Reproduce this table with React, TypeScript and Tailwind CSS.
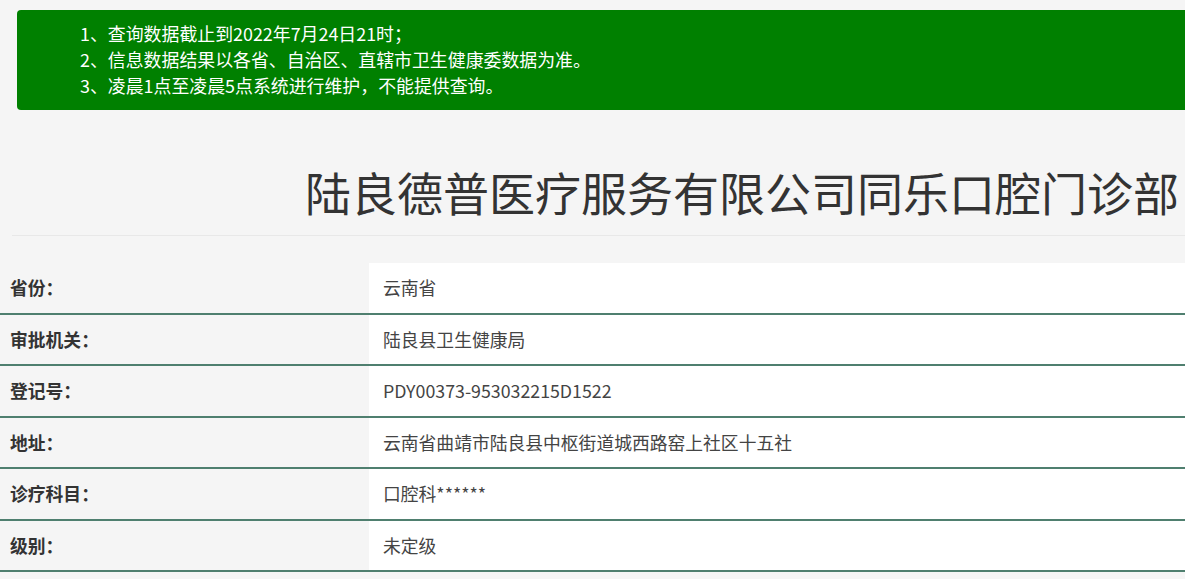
/* ------------------------------------------------------------------
   医疗机构查询结果页
-------------------------------------------------------------------*/
const notes = [
  "1、查询数据截止到2022年7月24日21时；",
  "2、信息数据结果以各省、自治区、直辖市卫生健康委数据为准。",
  "3、凌晨1点至凌晨5点系统进行维护，不能提供查询。",
];

const rows = [
  { label: "省份：", value: "云南省" },
  { label: "审批机关：", value: "陆良县卫生健康局" },
  { label: "登记号：", value: "PDY00373-953032215D1522" },
  { label: "地址：", value: "云南省曲靖市陆良县中枢街道城西路窑上社区十五社" },
  { label: "诊疗科目：", value: "口腔科******" },
  { label: "级别：", value: "未定级" },
];

export default function App() {
  return (
    <main
      className="min-h-screen bg-[#f5f5f5] text-[#333] overflow-hidden"
      style={{ fontFamily: '"Microsoft YaHei", "Noto Sans CJK SC", "Noto Sans", sans-serif' }}
    >
      {/* ───────────────── NOTICE ───────────────── */}
      <section className="pt-[10px] pl-[17px] -mr-[10px]">
        <div className="bg-[#008000] rounded-[4px] h-[100px] pt-[10px] pl-[63px] text-white text-[17.9px] leading-[26px]">
          {notes.map((n) => (
            <p key={n}>{n}</p>
          ))}
        </div>
      </section>

      {/* ───────────────── TITLE ───────────────── */}
      <section className="pl-[12px]">
        <h1 className="text-right pr-[6px] pt-[53px] pb-[16px] text-[46px] leading-[56px] font-normal text-[#333] border-b border-[#e8e8e8]">
          陆良德普医疗服务有限公司同乐口腔门诊部
        </h1>
      </section>

      {/* ───────────────── DETAIL TABLE ───────────────── */}
      <section className="mt-[27px]">
        {rows.map(({ label, value }) => (
          <div key={label} className="flex h-[51.5px] border-b-2 border-[#4f7f6f]">
            <div className="w-[369px] shrink-0 flex items-center pl-[10px] text-[17.8px] font-bold text-[#333]">
              {label}
            </div>
            <div className="flex-1 flex items-center bg-white pl-[14px] text-[17.8px] text-[#444]">
              {value}
            </div>
          </div>
        ))}
      </section>
    </main>
  );
}
